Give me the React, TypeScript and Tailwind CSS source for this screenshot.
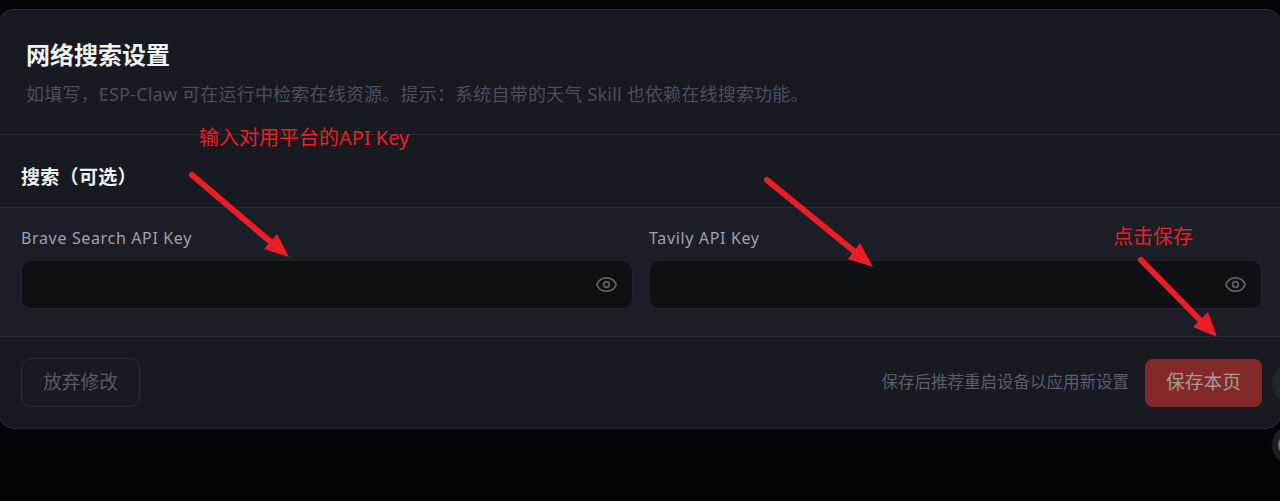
import { Eye } from "lucide-react";

const cjk = "font-['Noto_Sans','Noto_Sans_CJK_SC',sans-serif]";

function KeyField({ label }: { label: string }) {
  return (
    <div>
      <label className="block h-[24px] text-[16px] leading-[24px] tracking-[0.65px] text-[#9aa3b2]">{label}</label>
      <div className="mt-[10px] flex h-[49px] items-center justify-end rounded-[10px] border border-[#22252b] bg-[#0f1014] pr-[14px]">
        <Eye className="h-[23px] w-[23px] text-[#5f636e]" strokeWidth={1.75} />
      </div>
    </div>
  );
}

function Arrow({ x1, y1, x2, y2, head }: { x1: number; y1: number; x2: number; y2: number; head: string }) {
  return (
    <>
      <line x1={x1} y1={y1} x2={x2} y2={y2} stroke="#ee1c25" strokeWidth={6} strokeLinecap="round" />
      <polygon points={head} fill="#ee1c25" />
    </>
  );
}

export default function App() {
  return (
    <div className={`relative h-[501px] w-[1280px] overflow-hidden bg-[#050507] pt-[9px] ${cjk}`}>
      {/* settings card */}
      <div className="-mx-[2px] overflow-hidden rounded-[16px] border border-[#292c33] bg-[#171a21]">
        <div className="h-[125px] border-b border-[#292c33] pl-[27px] pt-[27px]">
          <h2 className="text-[24px] font-bold leading-[36px] text-[#f1f2f4]">网络搜索设置</h2>
          <p className="mt-[8px] text-[18px] leading-[26px] tracking-[0.2px] text-[#4a4f5c]">
            如填写，ESP-Claw 可在运行中检索在线资源。提示：系统自带的天气 Skill 也依赖在线搜索功能。
          </p>
        </div>
        <div className="flex h-[73px] items-center border-b border-[#292c33] pl-[22px] pt-[12px]">
          <h3 className="text-[19px] font-bold tracking-[0.3px] text-[#eef0f2]">搜索（可选）</h3>
        </div>
        <div className="grid h-[129px] grid-cols-[612px_613px] gap-[16px] border-b border-[#292c33] bg-[#1b1e26] pl-[22px] pt-[18px]">
          <KeyField label="Brave Search API Key" />
          <KeyField label="Tavily API Key" />
        </div>
        <div className="flex h-[91px] items-center justify-between pl-[22px] pr-[19px]">
          <button className="h-[49px] w-[119px] rounded-[10px] border border-[#2a2d34] text-[18.75px] text-[#565a63]">放弃修改</button>
          <div className="flex items-center gap-[16px]">
            <span className="text-[16.5px] text-[#585e6b]">保存后推荐重启设备以应用新设置</span>
            <button className="h-[48px] w-[117px] rounded-[8px] bg-[#832a28] text-[18.75px] text-[#a39a98]">保存本页</button>
          </div>
        </div>
      </div>

      {/* cut off round buttons at the right edge */}
      <div className="absolute left-[1272px] top-[363px] h-[40px] w-[40px] rounded-full bg-[#24262b]" />
      <div className="absolute left-[1272px] top-[425px] flex h-[40px] w-[40px] items-center rounded-full bg-[#1e1f24] pl-[6px]">
        <div className="h-[22px] w-[22px] rounded-full bg-[#a8506f]" />
      </div>

      {/* red annotations */}
      <svg className="absolute left-0 top-0" width="1280" height="501">
        <Arrow x1={192} y1={175} x2={272} y2={243} head="289,257 264,249 277,234" />
        <Arrow x1={767} y1={180} x2={855} y2={252} head="873,267 848,259 860,243" />
        <Arrow x1={1141} y1={260} x2={1201} y2={321} head="1217,337 1193,327 1208,312" />
      </svg>
      <span className="absolute left-[199px] top-[124px] text-[20px] leading-[28px] text-[#ee1c25]">输入对用平台的API Key</span>
      <span className="absolute left-[1113px] top-[223px] text-[20px] leading-[28px] text-[#ee1c25]">点击保存</span>
    </div>
  );
}
